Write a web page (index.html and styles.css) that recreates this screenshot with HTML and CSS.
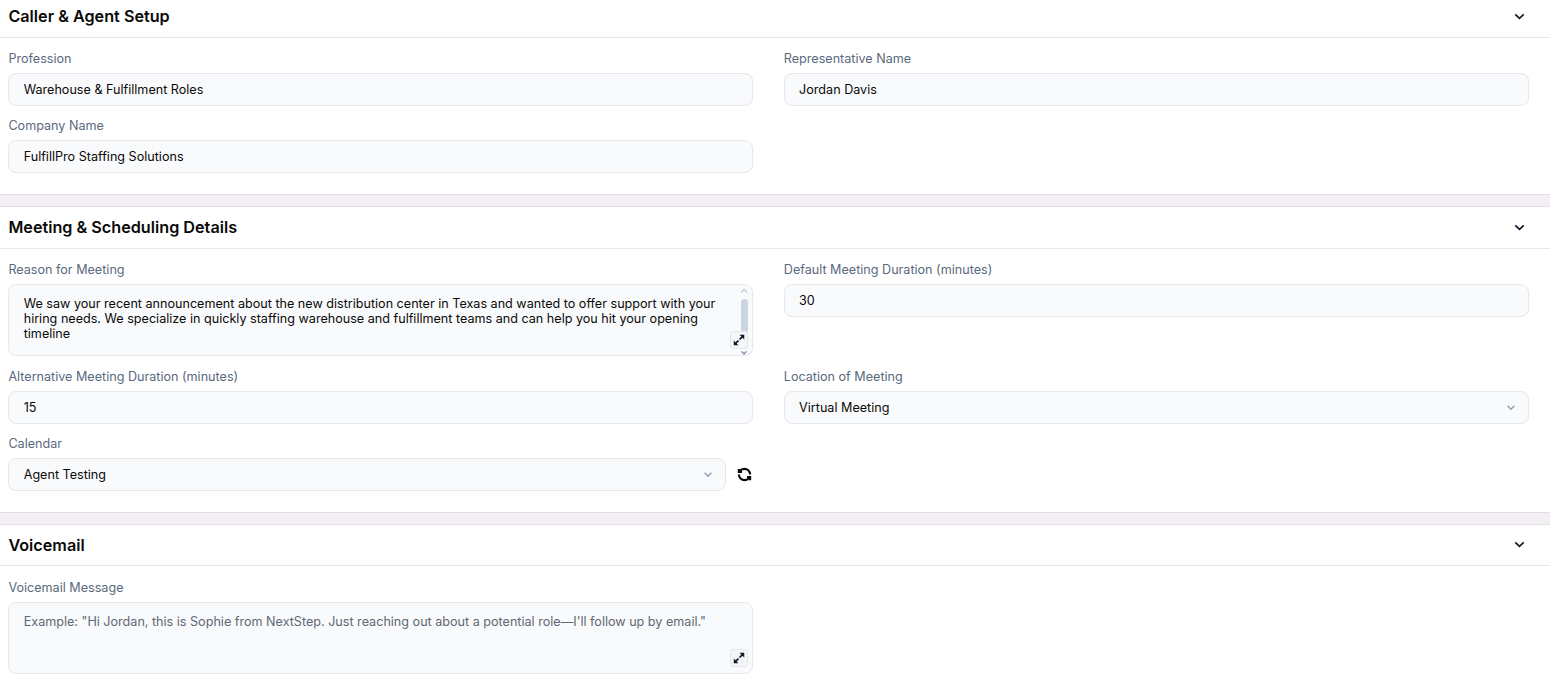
FILE: index.html
```html
<!DOCTYPE html>
<html lang="en">
<head>
<meta charset="utf-8">
<title>Agent Setup</title>
<link rel="stylesheet" href="styles.css">
</head>
<body>
<main class="page">
  <section class="section">
    <header class="section-head">
      <h2>Caller &amp; Agent Setup</h2>
      <svg class="chev" viewBox="0 0 12 8"><path d="M1.2 1.5 6 6.2l4.8-4.7"/></svg>
    </header>
    <div class="grid">
      <div class="field"><div class="label">Profession</div><div class="control">Warehouse &amp; Fulfillment Roles</div></div>
      <div class="field"><div class="label">Representative Name</div><div class="control">Jordan Davis</div></div>
      <div class="field"><div class="label">Company Name</div><div class="control">FulfillPro Staffing Solutions</div></div>
    </div>
  </section>
  <div class="divider"></div>
  <section class="section">
    <header class="section-head">
      <h2>Meeting &amp; Scheduling Details</h2>
      <svg class="chev" viewBox="0 0 12 8"><path d="M1.2 1.5 6 6.2l4.8-4.7"/></svg>
    </header>
    <div class="grid">
      <div class="field">
        <div class="label">Reason for Meeting</div>
        <div class="control area">
          <div class="area-text">We saw your recent announcement about the new distribution center in Texas and wanted to offer support with your hiring needs. We specialize in quickly staffing warehouse and fulfillment teams and can help you hit your opening timeline</div>
          <div class="scrollbar">
            <svg class="sb-arrow" viewBox="0 0 8 5"><path d="M1 4.5 4 1.2l3 3.3"/></svg>
            <div class="sb-thumb"></div>
            <svg class="sb-arrow sb-down" viewBox="0 0 8 5"><path d="M1 .5 4 3.8 7 .5"/></svg>
          </div>
          <div class="expand"><svg viewBox="0 0 16 16"><path d="M8.8 1H15v6.2l-2.3-2.3-3.2 3.2-1.6-1.6 3.2-3.2zM7.2 15H1V8.8l2.3 2.3 3.2-3.2 1.6 1.6-3.2 3.2z"/></svg></div>
        </div>
      </div>
      <div class="field"><div class="label">Default Meeting Duration (minutes)</div><div class="control">30</div></div>
      <div class="field"><div class="label">Alternative Meeting Duration (minutes)</div><div class="control">15</div></div>
      <div class="field">
        <div class="label">Location of Meeting</div>
        <div class="control select">Virtual Meeting<svg class="sel-chev" viewBox="0 0 12 8"><path d="M2 2l4 4 4-4"/></svg></div>
      </div>
      <div class="field">
        <div class="label">Calendar</div>
        <div class="with-action">
          <div class="control select">Agent Testing<svg class="sel-chev" viewBox="0 0 12 8"><path d="M2 2l4 4 4-4"/></svg></div>
          <svg class="sync" viewBox="0 0 24 24"><path d="M21 12a9 9 0 0 0-9-9 9.75 9.75 0 0 0-6.74 2.74L3 8"/><path d="M3 3v5h5"/><path d="M3 12a9 9 0 0 0 9 9 9.75 9.75 0 0 0 6.74-2.74L21 16"/><path d="M16 16h5v5"/></svg>
        </div>
      </div>
    </div>
  </section>
  <div class="divider"></div>
  <section class="section">
    <header class="section-head">
      <h2>Voicemail</h2>
      <svg class="chev" viewBox="0 0 12 8"><path d="M1.2 1.5 6 6.2l4.8-4.7"/></svg>
    </header>
    <div class="grid">
      <div class="field">
        <div class="label">Voicemail Message</div>
        <div class="control area placeholder">
          <div class="area-text">Example: "Hi Jordan, this is Sophie from NextStep. Just reaching out about a potential role—I'll follow up by email."</div>
          <div class="expand"><svg viewBox="0 0 16 16"><path d="M8.8 1H15v6.2l-2.3-2.3-3.2 3.2-1.6-1.6 3.2-3.2zM7.2 15H1V8.8l2.3 2.3 3.2-3.2 1.6 1.6-3.2 3.2z"/></svg></div>
        </div>
      </div>
    </div>
  </section>
</main>
</body>
</html>
```
FILE: styles.css
```css
* { box-sizing: border-box; }
html, body { margin: 0; height: 680px; overflow: hidden; background: #fff; }
body { font-family: Inter, "Liberation Sans", sans-serif; color: #0a0a0a; }
.page { margin-top: -3.6px; }
.section-head {
  height: 41.4px;
  display: flex;
  align-items: center;
  justify-content: space-between;
  padding: 0 25px 1px 8.4px;
  border-bottom: 1px solid #e5e7eb;
}
.section-head h2 { margin: 0; font-size: 16.2px; line-height: 24px; font-weight: 600; color: #0a0a0a; }
.chev { width: 11px; height: 7px; fill: none; stroke: #0f172a; stroke-width: 1.9; }
.grid {
  display: grid;
  grid-template-columns: 1fr 1fr;
  column-gap: 30.6px;
  row-gap: 10px;
  padding: 11.6px 21.4px 21px 8.4px;
  align-items: start;
}
.label { font-size: 12.6px; line-height: 20px; color: #5a6a7e; margin-bottom: 4px; }
.control {
  height: 33px;
  display: flex;
  align-items: center;
  padding: 0 14.3px;
  font-size: 12.6px;
  color: #0a0a0a;
  background: #f9fafb;
  border: 1px solid #e5e7eb;
  border-radius: 8px;
}
.select { justify-content: space-between; flex: 1; padding-right: 12px; }
.sel-chev { width: 10px; height: 7px; fill: none; stroke: #8f9bb0; stroke-width: 1.7; }
.with-action { display: flex; align-items: center; gap: 11px; }
.sync { width: 15px; height: 15px; fill: none; stroke: #0a0a0a; stroke-width: 3.4; flex: none; margin-right: 1px; }
.area {
  position: relative;
  height: 72px;
  margin-bottom: 0.6px;
  align-items: flex-start;
  padding: 11px 14.3px;
}
.area-text { line-height: 15px; padding-right: 10px; }
.placeholder { color: #5f6875; }
.scrollbar {
  position: absolute;
  top: 2px;
  right: 2px;
  bottom: 0;
  width: 12px;
  display: flex;
  flex-direction: column;
  align-items: center;
}
.sb-arrow { width: 8px; height: 5px; fill: none; stroke: #c5ccd6; stroke-width: 1.3; margin-top: 1px; flex: none; }
.sb-down { margin-top: auto; stroke: #64748b; height: 4px; }
.sb-thumb { width: 7px; height: 34px; margin-top: 6px; background: #cbd5e1; border-radius: 4px; flex: none; }
.expand {
  position: absolute;
  right: 4px;
  bottom: 6.4px;
  width: 18px;
  height: 18px;
  display: flex;
  align-items: center;
  justify-content: center;
  background: #f5f6f9;
  border: 1px solid #e5e7eb;
  border-radius: 3px;
}
.expand svg { width: 12px; height: 12px; fill: #111827; }
.divider {
  height: 13px;
  background: #f3eff5;
  border-top: 1px solid #e0e0e0;
  border-bottom: 1px solid #e0e0e0;
}
```
